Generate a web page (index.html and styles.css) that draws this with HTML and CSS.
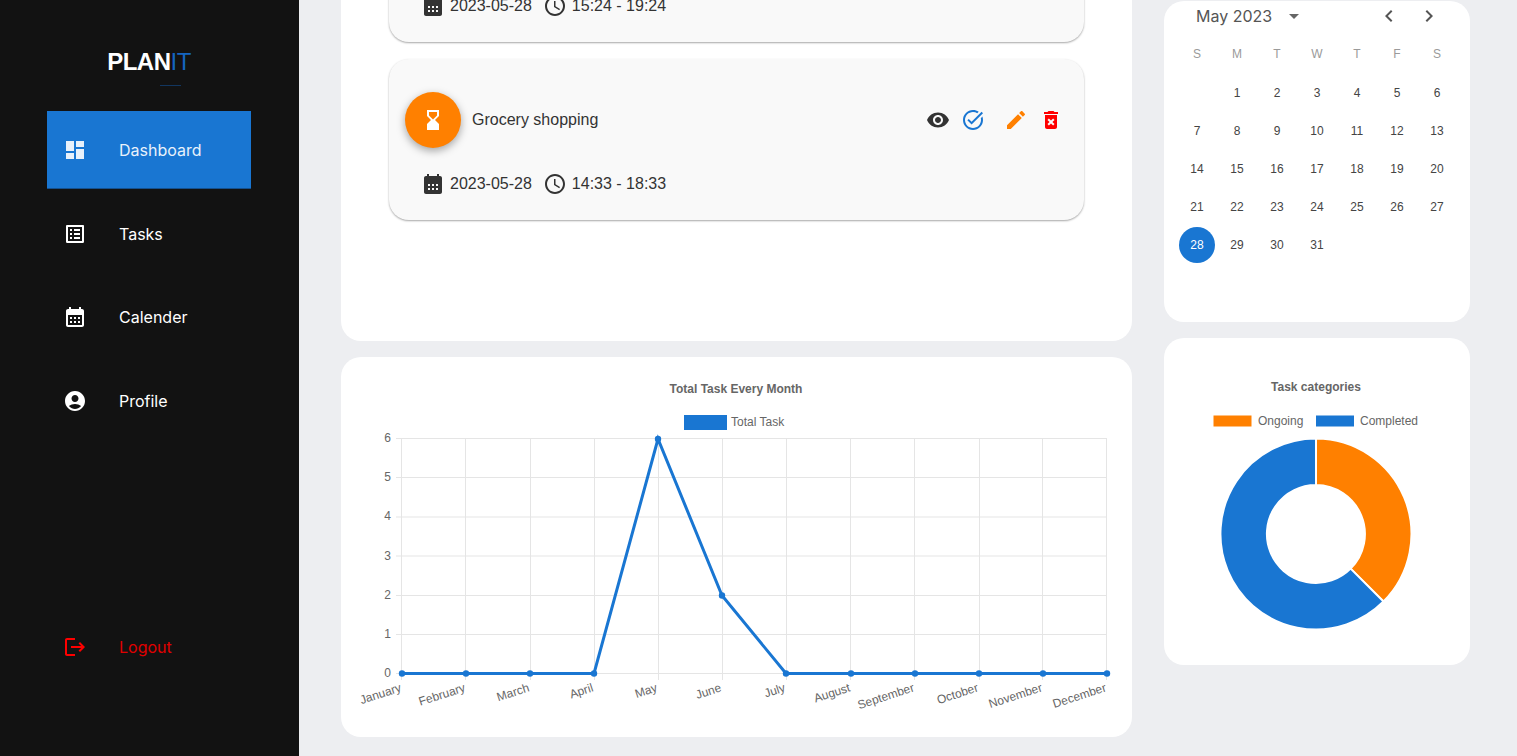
FILE: index.html
```html
<!DOCTYPE html>
<html lang="en">
<head>
  <meta charset="UTF-8">
  <meta name="viewport" content="width=device-width, initial-scale=1.0">
  <title>Planit Dashboard</title>
  <link rel="stylesheet" href="styles.css">
</head>
<body>
  <div class="app">
    <aside class="sidebar">
      <div class="logo">
        <div class="logo-text">PLAN<span class="logo-it">IT</span></div>
        <div class="logo-line"></div>
      </div>
      <nav class="nav">
        <a class="nav-item active">
          <svg class="icon" viewBox="0 0 24 24"><path d="M3 13h8V3H3v10zm0 8h8v-6H3v6zm10 0h8V11h-8v10zm0-18v6h8V3h-8z"/></svg>
          <span>Dashboard</span>
        </a>
        <a class="nav-item">
          <svg class="icon" viewBox="0 0 24 24"><path d="M19 5v14H5V5h14m1.1-2H3.9c-.5 0-.9.4-.9.9v16.2c0 .4.4.9.9.9h16.2c.4 0 .9-.5.9-.9V3.9c0-.5-.5-.9-.9-.9zM11 7h6v2h-6V7zm0 4h6v2h-6v-2zm0 4h6v2h-6zM7 7h2v2H7zm0 4h2v2H7zm0 4h2v2H7z"/></svg>
          <span>Tasks</span>
        </a>
        <a class="nav-item">
          <svg class="icon" viewBox="0 0 24 24"><path d="M19 4h-1V2h-2v2H8V2H6v2H5c-1.11 0-1.99.9-1.99 2L3 20c0 1.1.89 2 2 2h14c1.1 0 2-.9 2-2V6c0-1.1-.9-2-2-2zm0 16H5V10h14v10zM9 14H7v-2h2v2zm4 0h-2v-2h2v2zm4 0h-2v-2h2v2zm-8 4H7v-2h2v2zm4 0h-2v-2h2v2zm4 0h-2v-2h2v2z"/></svg>
          <span>Calender</span>
        </a>
        <a class="nav-item">
          <svg class="icon" viewBox="0 0 24 24"><path d="M12 2C6.48 2 2 6.48 2 12s4.48 10 10 10 10-4.48 10-10S17.52 2 12 2zm0 4c1.93 0 3.5 1.57 3.5 3.5S13.93 13 12 13s-3.5-1.57-3.5-3.5S10.07 6 12 6zm0 14c-2.03 0-4.43-.82-6.14-2.88C7.55 15.8 9.68 15 12 15s4.45.8 6.14 2.12C16.43 19.18 14.03 20 12 20z"/></svg>
          <span>Profile</span>
        </a>
      </nav>
      <a class="nav-item logout">
        <svg class="icon" viewBox="0 0 24 24"><path d="M17 7l-1.41 1.41L18.17 11H8v2h10.17l-2.58 2.58L17 17l5-5zM4 5h8V3H4c-1.1 0-2 .9-2 2v14c0 1.1.9 2 2 2h8v-2H4V5z"/></svg>
        <span>Logout</span>
      </a>
    </aside>

    <main class="main">
      <div class="col col-left">
        <section class="card task-list">
          <div class="task">
            <div class="task-meta">
              <svg class="icon" viewBox="0 0 24 24"><path d="M19 4h-1V2h-2v2H8V2H6v2H5c-1.11 0-1.99.9-1.99 2L3 20c0 1.1.89 2 2 2h14c1.1 0 2-.9 2-2V6c0-1.1-.9-2-2-2zM9 18H7v-2h2v2zm0-4H7v-2h2v2zm4 4h-2v-2h2v2zm0-4h-2v-2h2v2zm4 4h-2v-2h2v2zm0-4h-2v-2h2v2z"/></svg>
              <span class="meta-date">2023-05-28</span>
              <svg class="icon" viewBox="0 0 24 24"><path d="M11.99 2C6.47 2 2 6.48 2 12s4.47 10 9.99 10C17.52 22 22 17.52 22 12S17.52 2 11.99 2zM12 20c-4.42 0-8-3.58-8-8s3.58-8 8-8 8 3.58 8 8-3.58 8-8 8zm.5-13H11v6l5.25 3.15.75-1.23-4.5-2.67z"/></svg>
              <span>15:24 - 19:24</span>
            </div>
          </div>
          <div class="task">
            <div class="task-head">
              <div class="task-avatar">
                <svg class="icon" viewBox="0 0 24 24"><path d="m18 22-.01-6L14 12l3.99-4.01L18 2H6v6l4 4-4 3.99V22h12zM8 7.5V4h8v3.5l-4 4-4-4z"/></svg>
              </div>
              <span class="task-title">Grocery shopping</span>
              <div class="task-actions">
                <svg class="icon icon-view" viewBox="0 0 24 24"><path d="M12 4.5C7 4.5 2.73 7.61 1 12c1.73 4.39 6 7.5 11 7.5s9.27-3.11 11-7.5c-1.73-4.39-6-7.5-11-7.5zM12 17c-2.76 0-5-2.24-5-5s2.24-5 5-5 5 2.24 5 5-2.24 5-5 5zm0-8c-1.66 0-3 1.34-3 3s1.34 3 3 3 3-1.34 3-3-1.34-3-3-3z"/></svg>
                <svg class="icon icon-done" viewBox="0 0 24 24"><path d="M22 5.18 10.59 16.6l-4.24-4.24 1.41-1.41 2.83 2.83 10-10L22 5.18zm-2.21 5.04c.13.57.21 1.17.21 1.78 0 4.42-3.58 8-8 8s-8-3.58-8-8 3.58-8 8-8c1.58 0 3.04.46 4.28 1.25l1.44-1.44C16.1 2.67 14.13 2 12 2 6.48 2 2 6.48 2 12s4.48 10 10 10 10-4.48 10-10c0-1.19-.22-2.33-.6-3.39l-1.61 1.61z"/></svg>
                <svg class="icon icon-edit" viewBox="0 0 24 24"><path d="M3 17.25V21h3.75L17.81 9.94l-3.75-3.75L3 17.25zM20.71 7.04c.39-.39.39-1.02 0-1.41l-2.34-2.34c-.39-.39-1.02-.39-1.41 0l-1.83 1.83 3.75 3.75 1.83-1.83z"/></svg>
                <svg class="icon icon-delete" viewBox="0 0 24 24"><path d="M6 19c0 1.1.9 2 2 2h8c1.1 0 2-.9 2-2V7H6v12zm2.46-7.12 1.41-1.41L12 12.59l2.12-2.12 1.41 1.41L13.41 14l2.12 2.12-1.41 1.41L12 15.41l-2.12 2.12-1.41-1.41L10.59 14l-2.13-2.12zM15.5 4l-1-1h-5l-1 1H5v2h14V4z"/></svg>
              </div>
            </div>
            <div class="task-meta">
              <svg class="icon" viewBox="0 0 24 24"><path d="M19 4h-1V2h-2v2H8V2H6v2H5c-1.11 0-1.99.9-1.99 2L3 20c0 1.1.89 2 2 2h14c1.1 0 2-.9 2-2V6c0-1.1-.9-2-2-2zM9 18H7v-2h2v2zm0-4H7v-2h2v2zm4 4h-2v-2h2v2zm0-4h-2v-2h2v2zm4 4h-2v-2h2v2zm0-4h-2v-2h2v2z"/></svg>
              <span class="meta-date">2023-05-28</span>
              <svg class="icon" viewBox="0 0 24 24"><path d="M11.99 2C6.47 2 2 6.48 2 12s4.47 10 9.99 10C17.52 22 22 17.52 22 12S17.52 2 11.99 2zM12 20c-4.42 0-8-3.58-8-8s3.58-8 8-8 8 3.58 8 8-3.58 8-8 8zm.5-13H11v6l5.25 3.15.75-1.23-4.5-2.67z"/></svg>
              <span>14:33 - 18:33</span>
            </div>
          </div>
        </section>

        <section class="card chart-card">
          <svg class="chart" width="791" height="380" viewBox="341 357 791 380">
            <text class="chart-title" x="736" y="393" text-anchor="middle">Total Task Every Month</text>
            <rect class="swatch-blue" x="684" y="415" width="43" height="15"/>
            <text class="chart-label" x="731" y="426">Total Task</text>
            <path class="grid" d="M396 438.5H1107M396 477.5H1107M396 517H1107M396 556H1107M396 595.5H1107M396 634.5H1107M396 673.5H1107"/>
            <path class="grid" d="M401.5 438.5V680M465.5 438.5V680M530.5 438.5V680M594.5 438.5V680M658.5 438.5V680M722.5 438.5V680M786.5 438.5V680M850.5 438.5V680M914.5 438.5V680M979.5 438.5V680M1042.5 438.5V680M1106.5 438.5V680"/>
            <text class="chart-label" x="391" y="442" text-anchor="end">6</text>
            <text class="chart-label" x="391" y="481" text-anchor="end">5</text>
            <text class="chart-label" x="391" y="520" text-anchor="end">4</text>
            <text class="chart-label" x="391" y="560" text-anchor="end">3</text>
            <text class="chart-label" x="391" y="599" text-anchor="end">2</text>
            <text class="chart-label" x="391" y="638" text-anchor="end">1</text>
            <text class="chart-label" x="391" y="677" text-anchor="end">0</text>
            <text class="chart-label" text-anchor="end" transform="translate(402 691) rotate(-18)">January</text>
            <text class="chart-label" text-anchor="end" transform="translate(466 691) rotate(-18)">February</text>
            <text class="chart-label" text-anchor="end" transform="translate(530 691) rotate(-18)">March</text>
            <text class="chart-label" text-anchor="end" transform="translate(594 691) rotate(-18)">April</text>
            <text class="chart-label" text-anchor="end" transform="translate(658 691) rotate(-18)">May</text>
            <text class="chart-label" text-anchor="end" transform="translate(722 691) rotate(-18)">June</text>
            <text class="chart-label" text-anchor="end" transform="translate(786 691) rotate(-18)">July</text>
            <text class="chart-label" text-anchor="end" transform="translate(851 691) rotate(-18)">August</text>
            <text class="chart-label" text-anchor="end" transform="translate(915 691) rotate(-18)">September</text>
            <text class="chart-label" text-anchor="end" transform="translate(979 691) rotate(-18)">October</text>
            <text class="chart-label" text-anchor="end" transform="translate(1043 691) rotate(-18)">November</text>
            <text class="chart-label" text-anchor="end" transform="translate(1107 691) rotate(-18)">December</text>
            <polyline class="line" points="402,673.5 466,673.5 530,673.5 594,673.5 658,439 722,595.5 786,673.5 851,673.5 915,673.5 979,673.5 1043,673.5 1107,673.5"/>
            <g class="points">
              <circle cx="402" cy="673.5" r="3.2"/><circle cx="466" cy="673.5" r="3.2"/><circle cx="530" cy="673.5" r="3.2"/><circle cx="594" cy="673.5" r="3.2"/>
              <circle cx="658" cy="439" r="3.2"/><circle cx="722" cy="595.5" r="3.2"/><circle cx="786" cy="673.5" r="3.2"/><circle cx="851" cy="673.5" r="3.2"/>
              <circle cx="915" cy="673.5" r="3.2"/><circle cx="979" cy="673.5" r="3.2"/><circle cx="1043" cy="673.5" r="3.2"/><circle cx="1107" cy="673.5" r="3.2"/>
            </g>
          </svg>
        </section>
      </div>

      <div class="col col-right">
        <section class="card calendar">
          <div class="cal-head">
            <span class="cal-month">May 2023</span>
            <svg class="icon cal-drop" viewBox="0 0 24 24"><path d="M7 10l5 5 5-5z"/></svg>
            <div class="cal-arrows">
              <svg class="icon" viewBox="0 0 24 24"><path d="M15.41 7.41 14 6l-6 6 6 6 1.41-1.41L10.83 12z"/></svg>
              <svg class="icon" viewBox="0 0 24 24"><path d="M10 6 8.59 7.41 13.17 12l-4.58 4.59L10 18l6-6z"/></svg>
            </div>
          </div>
          <div class="cal-grid cal-week">
            <span>S</span><span>M</span><span>T</span><span>W</span><span>T</span><span>F</span><span>S</span>
          </div>
          <div class="cal-grid cal-days">
            <span></span><span>1</span><span>2</span><span>3</span><span>4</span><span>5</span><span>6</span>
            <span>7</span><span>8</span><span>9</span><span>10</span><span>11</span><span>12</span><span>13</span>
            <span>14</span><span>15</span><span>16</span><span>17</span><span>18</span><span>19</span><span>20</span>
            <span>21</span><span>22</span><span>23</span><span>24</span><span>25</span><span>26</span><span>27</span>
            <span class="today">28</span><span>29</span><span>30</span><span>31</span>
          </div>
        </section>

        <section class="card donut-card">
          <svg class="chart" width="306" height="327" viewBox="1164 338 306 327">
            <text class="chart-title" x="1316" y="391" text-anchor="middle">Task categories</text>
            <rect class="swatch-orange" x="1213.5" y="415.5" width="38" height="11"/>
            <text class="chart-label" x="1258" y="425">Ongoing</text>
            <rect class="swatch-blue" x="1316" y="415.5" width="38" height="11"/>
            <text class="chart-label" x="1360" y="425">Completed</text>
            <path class="slice-orange" d="M1316 438.5A95.5 95.5 0 0 1 1383.5 601.5L1350.6 568.6A49 49 0 0 0 1316 485Z"/>
            <path class="slice-blue" d="M1383.5 601.5A95.5 95.5 0 1 1 1316 438.5V485A49 49 0 1 0 1350.6 568.6Z"/>
          </svg>
        </section>
      </div>
    </main>
  </div>
</body>
</html>
```

FILE: styles.css
```css
* {
  box-sizing: border-box;
}

html, body {
  margin: 0;
  height: 100%;
  overflow: hidden;
}

body {
  background: #edeef1;
  font-family: "Liberation Sans", Arial, sans-serif;
  color: #333;
}

.app {
  display: flex;
  height: 756px;
}

.icon {
  display: block;
  width: 24px;
  height: 24px;
  fill: currentColor;
  flex-shrink: 0;
}

/* sidebar */
.sidebar {
  width: 299px;
  flex-shrink: 0;
  background: #121212;
  color: #fff;
  display: flex;
  flex-direction: column;
  padding: 48px 48px 70px 47px;
}

.logo {
  width: 204px;
  height: 63px;
  display: flex;
  flex-direction: column;
  align-items: center;
}

.logo-text {
  font-size: 24px;
  line-height: 28px;
  font-weight: 700;
  letter-spacing: -0.5px;
}

.logo-it {
  color: #1565c0;
  font-weight: 400;
}

.logo-line {
  width: 21px;
  height: 1px;
  margin: 9px 0 0 43px;
  background: #12365f;
}

.nav {
  display: flex;
  flex-direction: column;
  gap: 5.5px;
}

.nav-item {
  height: 78px;
  display: flex;
  align-items: center;
  gap: 32px;
  padding-left: 16px;
  font-family: Inter, "Liberation Sans", sans-serif;
  font-size: 16px;
  color: #fff;
}

.nav-item.active {
  background: #1976d2;
  border-bottom: 1px solid #14508f;
  color: #e8f1fb;
}

.logout {
  margin-top: auto;
  color: #e00000;
}

.logout .icon {
  color: #ff0000;
}

/* main area, scrolled down so the top of each column is cut off */
.main {
  flex: 1;
  display: flex;
  gap: 32px;
  padding-left: 42px;
  height: 756px;
}

.col {
  display: flex;
  flex-direction: column;
  justify-content: flex-end;
  gap: 16px;
  height: 756px;
}

.col-left {
  width: 791px;
  padding-bottom: 19px;
}

.col-right {
  width: 306px;
  padding-bottom: 91px;
}

.card {
  background: #fff;
  border-radius: 20px;
  flex-shrink: 0;
}

/* tasks */
.task-list {
  display: flex;
  flex-direction: column;
  gap: 17px;
  padding: 0 48px 121px;
}

.task {
  background: #f9f9f9;
  border-radius: 20px;
  box-shadow: 0 1px 2px rgba(0, 0, 0, 0.35);
  padding: 33px 16px 22px;
}

.task-head {
  display: flex;
  align-items: center;
  margin-bottom: 22px;
}

.task-avatar {
  width: 56px;
  height: 56px;
  border-radius: 50%;
  background: #ff8000;
  color: #fff;
  display: flex;
  align-items: center;
  justify-content: center;
  box-shadow: 0 3px 8px rgba(0, 0, 0, 0.35);
}

.task-title {
  margin-left: 11px;
  font-size: 16px;
}

.task-actions {
  margin-left: auto;
  display: flex;
  align-items: center;
  margin-right: 5px;
}

.icon-view {
  color: #333;
}

.icon-done {
  color: #1976d2;
  margin-left: 11px;
}

.icon-edit {
  color: #ff8000;
  margin-left: 19px;
}

.icon-delete {
  color: #ff0000;
  margin-left: 11px;
}

.task-meta {
  display: flex;
  align-items: center;
  height: 28px;
  padding-left: 16px;
  font-size: 16px;
  color: #333;
}

.task-meta .meta-date {
  margin: 0 11px 0 5px;
}

.task-meta .icon + span:last-child {
  margin-left: 5px;
}

/* charts */
.chart-card {
  height: 380px;
}

.donut-card {
  height: 327px;
}

.chart {
  display: block;
}

.chart-title {
  font-size: 12px;
  font-weight: 700;
  fill: #666;
}

.chart-label {
  font-size: 12px;
  fill: #666;
}

.swatch-blue {
  fill: #1976d2;
}

.swatch-orange {
  fill: #ff8000;
}

.grid {
  fill: none;
  stroke: #e5e5e5;
  stroke-width: 1;
}

.line {
  fill: none;
  stroke: #1976d2;
  stroke-width: 3;
}

.points {
  fill: #1976d2;
}

.slice-orange {
  fill: #ff8000;
  stroke: #fff;
  stroke-width: 2;
}

.slice-blue {
  fill: #1976d2;
  stroke: #fff;
  stroke-width: 2;
}

/* calendar */
.calendar {
  padding: 0 13px 58px;
}

.cal-head {
  display: flex;
  align-items: center;
  height: 30px;
  padding-left: 19px;
  color: #555;
}

.cal-month {
  font-family: Inter, "Liberation Sans", sans-serif;
  font-size: 16px;
}

.cal-drop {
  margin-left: 10px;
  color: #666;
}

.cal-arrows {
  margin-left: auto;
  display: flex;
  gap: 16px;
  margin-right: 16px;
}

.cal-grid {
  display: grid;
  grid-template-columns: repeat(7, 40px);
  justify-items: center;
  align-items: center;
  font-size: 12px;
}

.cal-week {
  height: 40px;
  margin-top: 3px;
  color: #9a9a9a;
}

.cal-days {
  grid-auto-rows: 38px;
  color: #444;
}

.cal-days span {
  width: 36px;
  height: 36px;
  display: flex;
  align-items: center;
  justify-content: center;
}

.cal-days .today {
  border-radius: 50%;
  background: #1976d2;
  color: #fff;
}
```
